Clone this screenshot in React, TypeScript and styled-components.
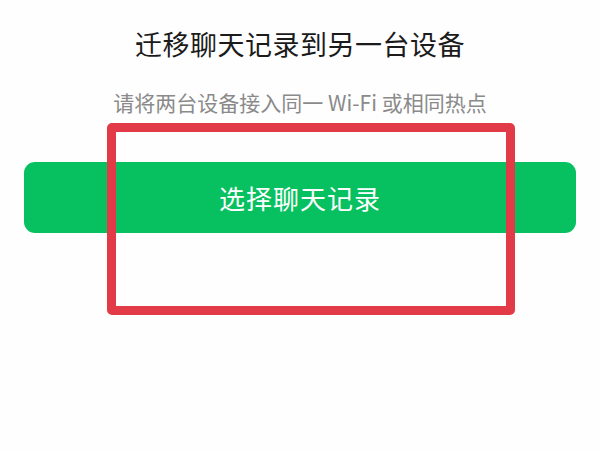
import styled, { createGlobalStyle } from 'styled-components'

const GlobalStyle = createGlobalStyle`
  html, body {
    margin: 0;
    padding: 0;
    background: #ffffff;
  }
  body {
    font-family: "Noto Sans CJK SC", "Noto Sans", sans-serif;
  }
`

const Page = styled.div`
  position: relative;
  width: 600px;
  height: 450px;
  overflow: hidden;
  background: #fefefe;
  display: flex;
  flex-direction: column;
  align-items: center;
  padding-top: 25px;
  box-sizing: border-box;
`

const Title = styled.h1`
  margin: 0;
  font-size: 27px;
  line-height: 38px;
  font-weight: 400;
  color: #1b1b1b;
  letter-spacing: 0.5px;
`

const Hint = styled.p`
  margin: 25px 0 0;
  font-size: 21px;
  line-height: 28px;
  color: #8a8a8a;
`

const PrimaryButton = styled.button`
  margin-top: 46px;
  width: 552px;
  height: 71px;
  border: none;
  border-radius: 11px;
  background: #07c160;
  color: #ffffff;
  font-family: inherit;
  font-size: 26px;
  letter-spacing: 1px;
  cursor: pointer;
`

// annotation drawn over the screenshot
const Highlight = styled.div`
  position: absolute;
  left: 107px;
  top: 123px;
  width: 408px;
  height: 192px;
  box-sizing: border-box;
  border: 9px solid #e23a46;
  border-radius: 5px;
  pointer-events: none;
`

export default function App() {
  return (
    <>
      <GlobalStyle />
      <Page>
        <Title>迁移聊天记录到另一台设备</Title>
        <Hint>请将两台设备接入同一 Wi-Fi 或相同热点</Hint>
        <PrimaryButton>选择聊天记录</PrimaryButton>
        <Highlight />
      </Page>
    </>
  )
}
